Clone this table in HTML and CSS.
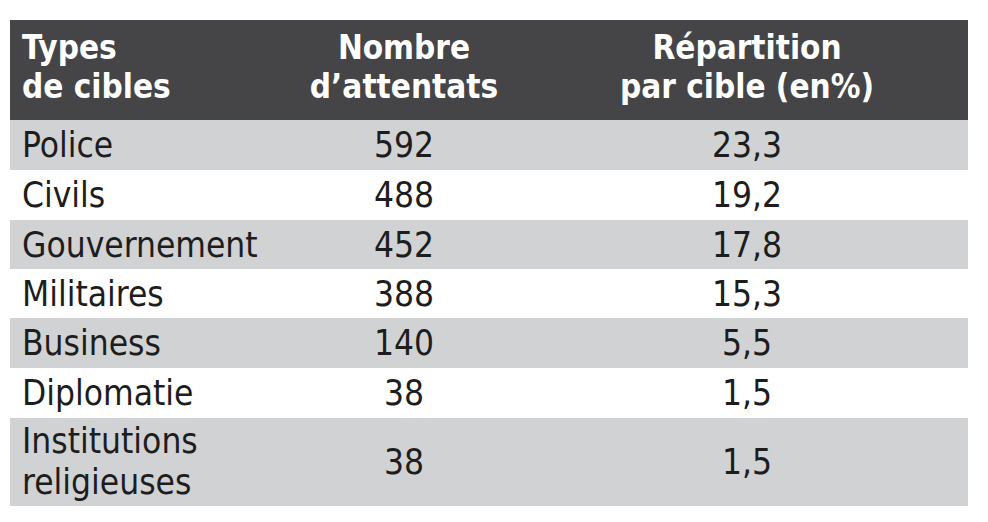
FILE: index.html
```html
<!DOCTYPE html>
<html lang="fr">
<head>
<meta charset="utf-8">
<title>Types de cibles</title>
<link rel="stylesheet" href="styles.css">
</head>
<body>
<div class="page">
<table class="targets">
  <colgroup>
    <col class="c1"><col class="c2"><col class="c3">
  </colgroup>
  <thead>
    <tr>
      <th class="left">Types<br>de cibles</th>
      <th>Nombre<br>d’attentats</th>
      <th>Répartition<br>par cible (en%)</th>
    </tr>
  </thead>
  <tbody>
    <tr class="shade"><td class="left">Police</td><td>592</td><td>23,3</td></tr>
    <tr><td class="left">Civils</td><td>488</td><td>19,2</td></tr>
    <tr class="shade short"><td class="left">Gouvernement</td><td>452</td><td>17,8</td></tr>
    <tr class="short"><td class="left">Militaires</td><td>388</td><td>15,3</td></tr>
    <tr class="shade"><td class="left">Business</td><td>140</td><td>5,5</td></tr>
    <tr><td class="left">Diplomatie</td><td>38</td><td>1,5</td></tr>
    <tr class="shade tall"><td class="left"><div class="ln">Institutions</div><div class="ln">religieuses</div></td><td>38</td><td>1,5</td></tr>
  </tbody>
</table>
</div>
</body>
</html>
```
FILE: styles.css
```css
html, body {
  margin: 0;
  padding: 0;
  background: #ffffff;
}
.page {
  padding: 20px 20px 0 10px;
}
.targets {
  width: 958px;
  border-collapse: collapse;
  table-layout: fixed;
  font-family: "DejaVu Sans Condensed", "DejaVu Sans", sans-serif;
  color: #1d1d1d;
}
.c1 { width: 272px; }
.c2 { width: 244px; }
.c3 { width: 442px; }
.targets th {
  background: #454547;
  color: #ffffff;
  font-weight: bold;
  font-size: 33px;
  line-height: 39px;
  height: 94px;
  padding: 0 0 6px 0;
  text-align: center;
  vertical-align: middle;
}
.targets td {
  font-size: 35px;
  line-height: 40px;
  height: 50px;
  padding: 0;
  text-align: center;
  vertical-align: middle;
}
.targets .left {
  text-align: left;
  padding-left: 12px;
}
.targets tr.shade td {
  background: #d1d2d4;
}
.targets tr.short td {
  height: 49px;
}
.targets tr.tall td {
  height: 88px;
}
.targets .ln {
  line-height: 41px;
}
```
